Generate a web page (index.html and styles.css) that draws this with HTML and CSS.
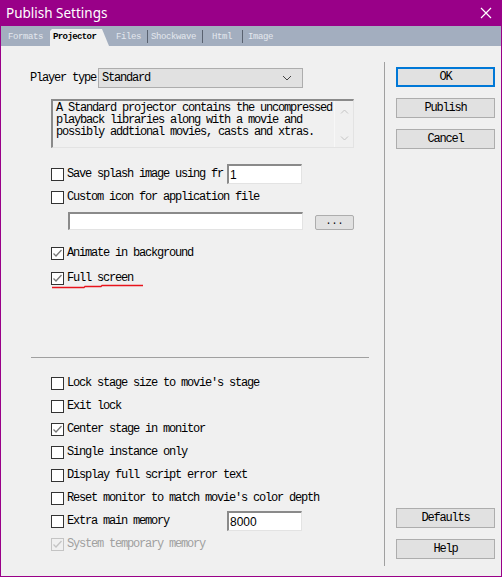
FILE: index.html
```html
<!DOCTYPE html>
<html>
<head>
<meta charset="utf-8">
<link rel="stylesheet" href="styles.css">
</head>
<body>
<div class="window">
  <div class="titlebar">
    <span class="title">Publish Settings</span>
    <svg class="close" width="12" height="12" viewBox="0 0 12 12"><path d="M1 1 L11 11 M11 1 L1 11" stroke="#fff" stroke-width="1.2" fill="none"/></svg>
  </div>
  <div class="tabs">
    <span class="tab t1">Formats</span>
    <span class="tab active">Projector</span>
    <span class="tab t3">Files</span><span class="tsep s1"></span>
    <span class="tab t4">Shockwave</span><span class="tsep s2"></span>
    <span class="tab t5">Html</span><span class="tsep s3"></span>
    <span class="tab t6">Image</span>
  </div>
  <div class="content">
    <div class="main">
      <div class="row player">
        <span class="lbl">Player type</span>
        <div class="select">
          <span>Standard</span>
          <svg width="10" height="6" viewBox="0 0 10 6"><polyline points="1,1 5,5 9,1" fill="none" stroke="#444" stroke-width="1"/></svg>
        </div>
      </div>
      <div class="desc">
        <div class="desc-text">A Standard projector contains the uncompressed playback libraries along with a movie and possibly addtional movies, casts and xtras.</div>
        <div class="scroll">
          <svg width="9" height="5" viewBox="0 0 9 5"><polyline points="1,4.5 4.5,1 8,4.5" fill="none" stroke="#c4c4c4" stroke-width="1"/></svg>
          <svg width="9" height="5" viewBox="0 0 9 5"><polyline points="1,0.5 4.5,4 8,0.5" fill="none" stroke="#c4c4c4" stroke-width="1"/></svg>
        </div>
      </div>
      <div class="row cbrow splash">
        <span class="cb"></span><span class="cut">Save splash image using fr</span>
        <div class="field small"><span>1</span></div>
      </div>
      <div class="row cbrow custom">
        <span class="cb"></span><span>Custom icon for application file</span>
      </div>
      <div class="row pathrow">
        <div class="field path"></div>
        <div class="btn dots">...</div>
      </div>
      <div class="row cbrow animate">
        <span class="cb"><svg width="11" height="11" viewBox="0 0 11 11"><polyline points="1.5,5.5 4,8 9.5,2" fill="none" stroke="#777" stroke-width="1.3"/></svg></span><span>Animate in background</span>
      </div>
      <div class="row cbrow full">
        <span class="cb"><svg width="11" height="11" viewBox="0 0 11 11"><polyline points="1.5,5.5 4,8 9.5,2" fill="none" stroke="#777" stroke-width="1.3"/></svg></span><span>Full screen</span>
        <svg class="redline" width="96" height="6" viewBox="0 0 96 6"><polyline points="1,4.5 33,4.5 34,3.5 50,3.5 51,2.5 92,2.5" fill="none" stroke="#e8141c" stroke-width="1.3"/></svg>
      </div>
      <div class="hsep"></div>
      <div class="lower">
        <div class="row cbrow"><span class="cb"></span><span>Lock stage size to movie's stage</span></div>
        <div class="row cbrow"><span class="cb"></span><span>Exit lock</span></div>
        <div class="row cbrow"><span class="cb"><svg width="11" height="11" viewBox="0 0 11 11"><polyline points="1.5,5.5 4,8 9.5,2" fill="none" stroke="#777" stroke-width="1.3"/></svg></span><span>Center stage in monitor</span></div>
        <div class="row cbrow"><span class="cb"></span><span>Single instance only</span></div>
        <div class="row cbrow"><span class="cb"></span><span>Display full script error text</span></div>
        <div class="row cbrow"><span class="cb"></span><span>Reset monitor to match movie's color depth</span></div>
        <div class="row cbrow mem"><span class="cb"></span><span class="memlbl">Extra main memory</span><div class="field small"><span>8000</span></div></div>
        <div class="row cbrow disabled"><span class="cb"><svg width="11" height="11" viewBox="0 0 11 11"><polyline points="1.5,5.5 4,8 9.5,2" fill="none" stroke="#c4c4c4" stroke-width="1.3"/></svg></span><span>System temporary memory</span></div>
      </div>
    </div>
    <div class="vsep"></div>
    <div class="side">
      <div class="btn big default">OK</div>
      <div class="btn big">Publish</div>
      <div class="btn big">Cancel</div>
      <div class="spacer"></div>
      <div class="btn big">Defaults</div>
      <div class="btn big">Help</div>
    </div>
  </div>
</div>
</body>
</html>
```
FILE: styles.css
```css
html, body {
  margin: 0;
  padding: 0;
  background: #f0f0f0;
}
.window {
  width: 502px;
  height: 577px;
  box-sizing: border-box;
  border: 1px solid #990088;
  border-top: none;
  background: #f0f0f0;
  display: flex;
  flex-direction: column;
  font-family: "Liberation Mono", "DejaVu Sans Mono", monospace;
  font-size: 12px;
  letter-spacing: -1.2px;
  color: #000;
}
.titlebar {
  height: 26px;
  margin: 0 -1px;
  background: #990088;
  display: flex;
  align-items: center;
  padding-left: 6px;
  padding-right: 10px;
  flex: none;
}
.title {
  font-family: "Noto Sans", "Liberation Sans", sans-serif;
  font-size: 13.5px;
  letter-spacing: 0;
  color: #fff;
  flex: 1;
  padding-bottom: 1px;
}
.close { display: block; }
.tabs {
  height: 20px;
  background: #a3aebf;
  display: flex;
  align-items: flex-end;
  padding-left: 7px;
  flex: none;
  font-size: 9px;
  letter-spacing: -0.4px;
  color: #e4e8ee;
}
.tab {
  height: 17px;
  line-height: 17px;
  white-space: nowrap;
}
.tab.active {
  background: #f0f0f0;
  color: #000;
  font-weight: bold;
  letter-spacing: -0.6px;
  margin-left: 7px;
  width: 59px;
  padding-left: 3px;
  box-sizing: border-box;
  clip-path: polygon(0 2px, 2px 0, 52px 0, 100% 100%, 0 100%);
}
.t3 { margin-left: 7px; }
.tsep {
  width: 1px;
  height: 13px;
  background: #5a6270;
  margin-bottom: 3px;
}
.s1 { margin-left: 6px; }
.t4 { margin-left: 3px; }
.s2 { margin-left: 6px; }
.t5 { margin-left: 9px; }
.s3 { margin-left: 10px; }
.t6 { margin-left: 5px; }

.content {
  flex: 1;
  display: flex;
}
.main {
  width: 383px;
  flex: none;
  display: flex;
  flex-direction: column;
  padding-top: 22px;
  box-sizing: border-box;
}
.row {
  display: flex;
  align-items: center;
  height: 20px;
  white-space: nowrap;
}
.player { padding-left: 29px; }
.lbl { width: 68px; }
.select {
  width: 205px;
  height: 20px;
  box-sizing: border-box;
  border: 1px solid #adadad;
  background: #e1e1e1;
  display: flex;
  align-items: center;
  justify-content: space-between;
  padding: 0 10px 0 3px;
}
.select svg { display: block; }
.desc {
  margin-top: 11px;
  margin-left: 50px;
  width: 303px;
  height: 49px;
  box-sizing: border-box;
  border-top: 2px solid #8a8a8a;
  border-left: 2px solid #8a8a8a;
  border-right: 1px solid #e3e3e3;
  border-bottom: 1px solid #e3e3e3;
  display: flex;
  background: #f0f0f0;
}
.desc-text {
  width: 280px;
  padding: 1px 0 0 3px;
  line-height: 12px;
  white-space: normal;
  letter-spacing: -1.2px;
}
.scroll {
  width: 18px;
  display: flex;
  flex-direction: column;
  justify-content: space-between;
  align-items: center;
  padding: 8px 0 6px;
  border-left: 1px solid #f7f7f7;
  margin-left: auto;
}
.scroll svg { display: block; }
.cbrow { padding-left: 50px; }
.cb {
  width: 13px;
  height: 13px;
  box-sizing: border-box;
  border: 1px solid #333;
  background: #fff;
  margin-right: 3px;
  flex: none;
  display: flex;
  align-items: center;
  justify-content: center;
}
.cb svg { display: block; }
.splash { margin-top: 16px; }
.cut {
  width: 160px;
}
.field {
  height: 20px;
  box-sizing: border-box;
  background: #fff;
  border-top: 2px solid #8a8a8a;
  border-left: 2px solid #8a8a8a;
  border-right: 1px solid #e3e3e3;
  border-bottom: 1px solid #e3e3e3;
  display: flex;
  align-items: center;
  padding-left: 1px;
  font-family: "Liberation Sans", Arial, sans-serif;
  font-size: 12px;
  letter-spacing: 0;
}
.field.small { width: 75px; }
.custom { margin-top: 3px; }
.pathrow {
  margin-top: 5px;
  height: 18px;
  padding-left: 67px;
  align-items: flex-end;
}
.field.path {
  width: 235px;
  height: 18px;
}
.btn {
  box-sizing: border-box;
  border: 1px solid #adadad;
  background: #e1e1e1;
  display: flex;
  align-items: center;
  justify-content: center;
}
.dots {
  width: 39px;
  height: 15px;
  margin-left: 12px;
  border-radius: 2px;
  font-size: 10px;
  letter-spacing: 0;
  padding-bottom: 3px;
}
.animate { margin-top: 13px; }
.full {
  margin-top: 5px;
  position: relative;
}
.redline {
  position: absolute;
  left: 50px;
  top: 15px;
  display: block;
}
.hsep {
  margin-top: 69px;
  margin-left: 30px;
  width: 338px;
  height: 1px;
  background: #a0a0a0;
}
.lower {
  margin-top: 15px;
  display: flex;
  flex-direction: column;
  gap: 3px;
}
.memlbl { width: 160px; }
.disabled { color: #a0a0a0; }
.disabled .cb { border-color: #c4c4c4; background: #f0f0f0; }

.vsep {
  width: 1px;
  background: #a0a0a0;
  margin: 16px 0 10px;
  flex: none;
}
.side {
  flex: 1;
  display: flex;
  flex-direction: column;
  padding: 21px 0 17px 11px;
  gap: 11px;
}
.btn.big {
  width: 99px;
  height: 20px;
}
.btn.default {
  border: 2px solid #0078d7;
}
.spacer { flex: 1; }
```
